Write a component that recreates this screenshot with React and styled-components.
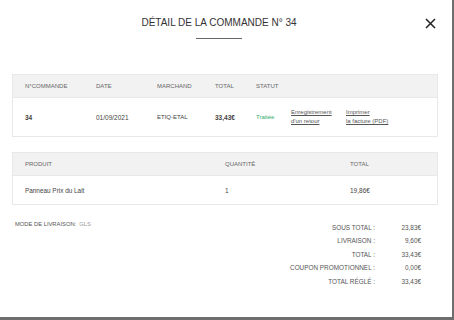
import styled, { createGlobalStyle } from 'styled-components'

const Global = createGlobalStyle`
  html, body { margin:0; padding:0; background:#6e6e6e; }
  body { font-family: "Liberation Sans", Arial, sans-serif; color:#333; }
`

let Modal = styled.div`
  width:452px;
  height:317px;
  background:#fff;
  box-sizing:border-box;
  padding:0 14px 0 12px;
  position:relative;
`
let Title = styled.div`
  padding-top:17px;
  margin-right:12px;
  text-align:center;
  font-size:10px;
  color:#333;
`
let Bar = styled.div`
  width:46px;
  height:1px;
  background:#666;
  margin:10px auto 0;
  position:relative;
  left:-6px;
`
let Close = styled.button`
  position:absolute;
  top:17px;
  right:16px;
  border:0;
  background:none;
  padding:0;
  width:11px;
  height:11px;
  cursor:pointer;
`
let Table = styled.div`
  border:1px solid #e8e8e8;
  margin-top:${p => p.top}px;
`
let Row = styled.div`
  display:grid;
  grid-template-columns:${p => p.cols};
  align-items:center;
  padding-left:12px;
  height:${p => p.h}px;
  background:${p => p.head ? '#f2f2f2' : '#fff'};
  border-bottom:${p => p.head ? '1px solid #e8e8e8' : '0'};
  font-size:6px;
  color:${p => p.head ? '#666' : '#444'};
`
let Cell = styled.div`
  font-weight:${p => p.bold ? 'bold' : 'normal'};
  color:${p => p.green ? '#2fae6b' : 'inherit'};
  font-size:${p => p.size || 6}px;
`
let Link = styled.a`
  color:#555;
  text-decoration:underline;
  line-height:9px;
  font-size:6px;
`
let Bottom = styled.div`
  display:flex;
  justify-content:space-between;
  margin-top:16px;
`
let Delivery = styled.div`
  font-size:5.8px;
  color:#555;
  padding-left:3px;
  span { color:#999; margin-left:3px; }
`
let Totals = styled.div`
  display:grid;
  grid-template-columns:auto 46px;
  row-gap:6.4px;
  margin-top:3px;
  margin-right:17px;
  font-size:6.4px;
  color:#555;
  text-align:right;
`

function App(){
    const totals = [
      ['SOUS TOTAL :', '23,83€'],
      ['LIVRAISON :', '9,60€'],
      ['TOTAL :', '33,43€'],
      ['COUPON PROMOTIONNEL :', '0,00€'],
      ['TOTAL RÉGLÉ :', '33,43€'],
    ]
    const c1 = '71px 61px 58px 41px 35px 55px 1fr'
    const c2 = '200px 125px 1fr'
    return(
        <Modal>
          <Global />
          <Title>DÉTAIL DE LA COMMANDE N° 34</Title>
          <Bar />
          <Close aria-label="fermer">
            <svg width="11" height="11" viewBox="0 0 11 11">
              <path d="M1 1L10 10M10 1L1 10" stroke="#222" strokeWidth="1.5" />
            </svg>
          </Close>

          <Table top={35}>
            <Row head h={22} cols={c1}>
              <Cell>N°COMMANDE</Cell>
              <Cell>DATE</Cell>
              <Cell>MARCHAND</Cell>
              <Cell>TOTAL</Cell>
              <Cell>STATUT</Cell>
              <Cell></Cell>
              <Cell></Cell>
            </Row>
            <Row h={38} cols={c1}>
              <Cell bold size={6.5}>34</Cell>
              <Cell size={6.5}>01/09/2021</Cell>
              <Cell>ETIQ-ETAL</Cell>
              <Cell bold size={6.5}>33,43€</Cell>
              <Cell green>Traitée</Cell>
              <Link href="#">Enregistrement<br/>d'un retour</Link>
              <Link href="#">Imprimer<br/>la facture (PDF)</Link>
            </Row>
          </Table>

          <Table top={15}>
            <Row head h={22} cols={c2}>
              <Cell>PRODUIT</Cell>
              <Cell>QUANTITÉ</Cell>
              <Cell>TOTAL</Cell>
            </Row>
            <Row h={28} cols={c2}>
              <Cell size={6.4}>Panneau Prix du Lait</Cell>
              <Cell size={6.5}>1</Cell>
              <Cell size={6.5}>19,86€</Cell>
            </Row>
          </Table>

          <Bottom>
            <Delivery>MODE DE LIVRAISON:<span>GLS</span></Delivery>
            <Totals>
              {totals.map((t) => (
                <>
                  <div key={t[0]}>{t[0]}</div>
                  <div key={t[0] + 'v'}>{t[1]}</div>
                </>
              ))}
            </Totals>
          </Bottom>
        </Modal>
    )
}

export default App;
